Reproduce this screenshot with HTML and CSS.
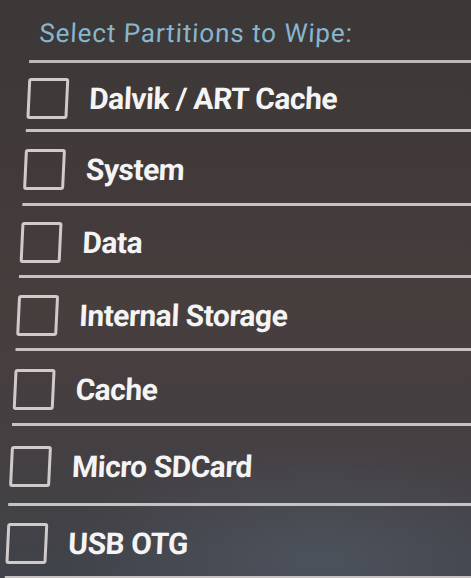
FILE: index.html
```html
<!DOCTYPE html>
<html>
<head>
<meta charset="utf-8">
<link rel="stylesheet" href="styles.css">
</head>
<body>
<div class="screen">
  <div class="title-row"><span class="title">Select Partitions to Wipe:</span></div>
  <div class="row"><span class="box"></span><span class="label">Dalvik / ART Cache</span></div>
  <div class="row"><span class="box"></span><span class="label">System</span></div>
  <div class="row"><span class="box"></span><span class="label">Data</span></div>
  <div class="row"><span class="box"></span><span class="label">Internal Storage</span></div>
  <div class="row"><span class="box"></span><span class="label">Cache</span></div>
  <div class="row"><span class="box"></span><span class="label">Micro SDCard</span></div>
  <div class="row"><span class="box"></span><span class="label">USB OTG</span></div>
</div>
</body>
</html>
```
FILE: styles.css
```css
html, body {
  margin: 0;
  padding: 0;
  width: 471px;
  height: 578px;
  overflow: hidden;
}
body {
  background:
    radial-gradient(ellipse 260px 120px at 320px 560px, rgba(90, 100, 115, 0.45), rgba(90, 100, 115, 0) 100%),
    linear-gradient(180deg, #3b3837 0%, #423a3a 30%, #473e3e 55%, #453f41 75%, #40434a 100%);
  font-family: Roboto, "Noto Sans", sans-serif;
}
.screen {
  width: 520px;
  padding-left: 32px;
  display: grid;
  grid-template-rows: 63px 69px 74px 72px 73px 75px 80px 73px;
  transform: skewX(-2.7deg);
  transform-origin: 0 0;
}
.title-row {
  border-bottom: 3px solid #bdb9ba;
  padding-top: 20px;
  padding-left: 9px;
  box-sizing: border-box;
}
.title {
  color: #88b6cf;
  font-size: 26px;
  line-height: 26px;
  font-weight: 400;
  letter-spacing: 0.9px;
  display: inline-block;
}
.row {
  display: flex;
  align-items: center;
  gap: 21px;
  border-bottom: 3px solid #c7c3c3;
  box-sizing: border-box;
  padding-top: 4px;
}
.box {
  width: 35px;
  height: 35px;
  border: 3px solid #cfcbcb;
  border-radius: 3px;
  flex: none;
}
.label {
  color: #f5f4f4;
  font-size: 30px;
  font-weight: 700;
  letter-spacing: -0.5px;
  display: inline-block;
}
```
